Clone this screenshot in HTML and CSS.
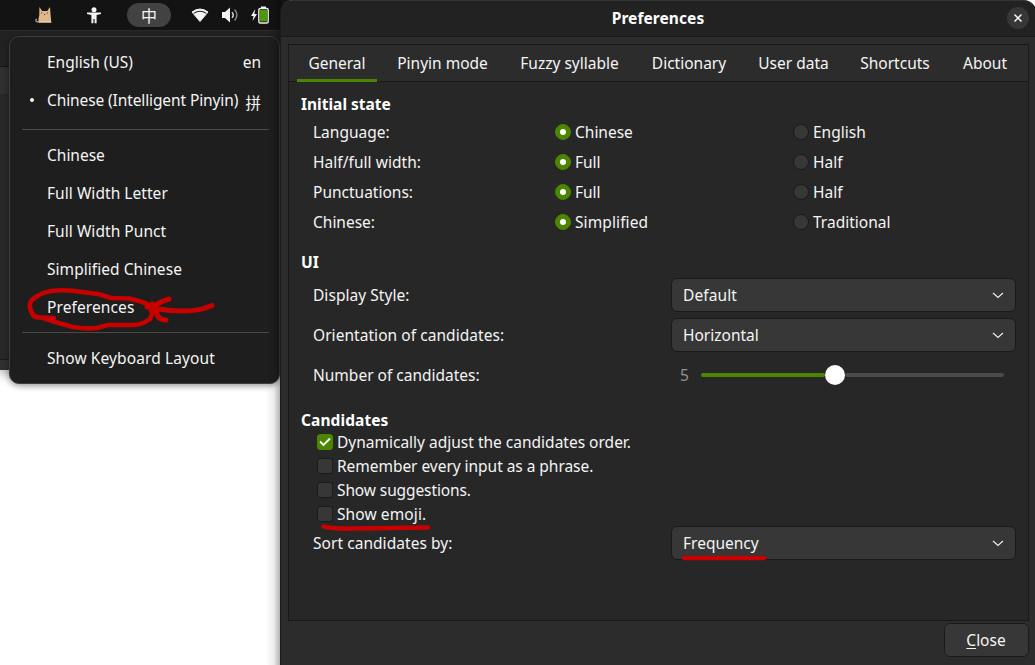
FILE: index.html
```html
<!DOCTYPE html>
<html lang="en">
<head>
<meta charset="utf-8">
<title>Preferences</title>
<link rel="stylesheet" href="styles.css">
</head>
<body>
<div class="desktop">
  <div class="back-window"><div class="back-head"></div><div class="back-body"></div><div class="back-foot"></div></div>
  <header class="topbar">
    <svg class="cat" width="18" height="18" viewBox="0 0 18 18"><path d="M4.500 15.500Q1 16.500 .8 14.200Q.8 13 2 13" fill="none" stroke="#b9a895" stroke-width="1.2"/><path d="M3.600 16.500Q3 13 4.300 9L4.400 1 7.200 5H12.300L15 1 15.600 9 16.300 16.500Z" fill="#dfb88a"/><path d="M6.200 7h1M11.800 7h1M9 8.500h1.200" stroke="#4c3825" stroke-width="1"/><path d="M4 16h12.300" stroke="#eadcca" stroke-width="1"/></svg>
    <svg class="person" width="14" height="18" viewBox="0 0 14 18"><circle cx="7" cy="2.8" r="2.5" fill="#f4f4f4"/><path d="M0 5.500H14V7L9.600 8V16.300H7.600V12H6.400V16.300H4.400V8L0 7Z" fill="#f4f4f4"/></svg>
    <div class="ime">中</div>
    <svg class="wifi" width="18" height="15" viewBox="0 0 18 15"><path d="M1 4Q9-2 17 4L9 13.5Z" fill="#f4f4f4" stroke="#f4f4f4"/><path d="M2.7 5.4Q9 1 15.3 5.4" fill="none" stroke="#242424" stroke-width="1.1"/></svg>
    <svg class="sound" width="17" height="16" viewBox="0 0 17 16"><path d="M0 5H3L8 .5V15.5L3 11H0Z" fill="#f4f4f4"/><path d="M10 5.2Q12.5 8 10 10.8" fill="none" stroke="#ddd" stroke-width="1.4"/><path d="M12.6 2.5Q17.2 8 12.6 13.5" fill="none" stroke="#888" stroke-width="1.4"/></svg>
    <svg class="battery" width="18" height="18" viewBox="0 0 18 18"><path d="M4.3 3 0 10H2.5L1.6 15 6 8H3.3Z" fill="#f4f4f4"/><path d="M10 1.500h5" stroke="#f4f4f4" stroke-width="2"/><rect x="7.800" y="2.500" width="9.400" height="14.500" rx="1.500" fill="#111" stroke="#eee" stroke-width="1.400"/><rect x="9" y="4" width="7" height="11.500" fill="#4e9a06"/></svg>
  </header>
  <nav class="menu">
    <div class="item"><span class="t">English (US)</span><span class="code">en</span></div>
    <div class="item current"><span class="t tight">Chinese (Intelligent Pinyin)</span><span class="code han">拼</span></div>
    <hr class="rule first">
    <div class="item"><span class="t">Chinese</span></div>
    <div class="item"><span class="t loose">Full Width Letter</span></div>
    <div class="item"><span class="t loose">Full Width Punct</span></div>
    <div class="item"><span class="t loose">Simplified Chinese</span></div>
    <div class="item"><span class="t looser">Preferences</span></div>
    <hr class="rule">
    <div class="item"><span class="t looser">Show Keyboard Layout</span></div>
  </nav>
  <div class="window-shade"></div>
  <main class="window">
    <header class="titlebar"><h1>Preferences</h1><button class="x"><svg width="10" height="10" viewBox="0 0 10 10"><path d="M1.500 1.500 8.500 8.500M8.500 1.500 1.500 8.500" stroke="#fff" stroke-width="1.400"/></svg></button></header>
    <section class="notebook">
      <div class="tabs">
        <div class="tab w1 on">General</div><div class="tab w2">Pinyin mode</div><div class="tab w3">Fuzzy syllable</div><div class="tab w4">Dictionary</div><div class="tab w5">User data</div><div class="tab w6">Shortcuts</div><div class="tab w7">About</div>
      </div>
      <div class="page">
        <h2>Initial state</h2>
        <div class="radio-row"><span class="t">Language:</span><label><i class="radio on"></i>Chinese</label><label><i class="radio"></i>English</label></div>
        <div class="radio-row"><span class="t loose">Half/full width:</span><label><i class="radio on"></i>Full</label><label><i class="radio"></i>Half</label></div>
        <div class="radio-row"><span class="t">Punctuations:</span><label><i class="radio on"></i>Full</label><label><i class="radio"></i>Half</label></div>
        <div class="radio-row"><span class="t">Chinese:</span><label class="looser"><i class="radio on"></i>Simplified</label><label><i class="radio"></i>Traditional</label></div>
        <h2 class="ui">UI</h2>
        <div class="field"><span class="t loose">Display Style:</span><div class="select looser">Default<svg width="12" height="7" viewBox="0 0 12 7"><path d="M1 1 6 5.4 11 1" fill="none" stroke="#eee" stroke-width="1.2"/></svg></div></div>
        <div class="field"><span class="t loose">Orientation of candidates:</span><div class="select">Horizontal<svg width="12" height="7" viewBox="0 0 12 7"><path d="M1 1 6 5.4 11 1" fill="none" stroke="#eee" stroke-width="1.2"/></svg></div></div>
        <div class="field"><span class="t">Number of candidates:</span><div class="slider"><span class="num">5</span><div class="track filled"></div><div class="knob"></div><div class="track rest"></div></div></div>
        <h2 class="cand">Candidates</h2>
        <label class="check-row"><i class="check on"><svg width="12" height="10" viewBox="0 0 12 10"><path d="M1 4.5 4.5 8 11 1.5" fill="none" stroke="#fff" stroke-width="1.800"/></svg></i><span>Dynamically adjust the candidates order.</span></label>
        <label class="check-row"><i class="check"></i><span class="snug">Remember every input as a phrase.</span></label>
        <label class="check-row"><i class="check"></i><span class="tight">Show suggestions.</span></label>
        <label class="check-row"><i class="check"></i><span class="looser">Show emoji.</span></label>
        <div class="field sort"><span class="t loose">Sort candidates by:</span><div class="select">Frequency<svg width="12" height="7" viewBox="0 0 12 7"><path d="M1 1 6 5.4 11 1" fill="none" stroke="#eee" stroke-width="1.2"/></svg></div></div>
      </div>
    </section>
    <footer class="actions"><button class="close"><span><u>C</u>lose</span></button></footer>
  </main>
  <svg class="ink" width="1035" height="665" viewBox="0 0 1035 665" fill="none" stroke="#c80000" stroke-linecap="round" stroke-linejoin="round">
    <path stroke-width="4.6" d="M54 318 42 317.500Q36 318 33 315Q28 307 31 301Q39 293 51 291Q66 289 82 292L98 294 111 298 129 298.500Q140 301 147 304L152 307 153 312 150 319Q142 325 132 325L108 325 97 328Q85 329 73 327L55 322 43 318"/>
    <path stroke-width="5" d="M169 299Q159 302 153 307L147 307M152 304 158 309Q170 311 184 311Q200 311 212 305.500M156 308Q156 320 166 320"/>
    <path stroke-width="7" d="M152 306V310"/>
    <path stroke-width="4.600" d="M323.500 526.500Q334 529 352 528.500L428 527.500M684 558H764"/>
  </svg>
</div>
</body>
</html>
```
FILE: styles.css
```css
*{box-sizing:border-box}
body{margin:0;background:#fff;color:#f4f4f4;font:15.500px/20px "Noto Sans","Noto Sans CJK SC",sans-serif}
.desktop{position:relative;width:1035px;height:665px;overflow:hidden;background:#fff}
.back-window{position:absolute;left:0;top:0;width:290px;height:370px;background:#282828;display:flex;flex-direction:column;box-shadow:0 2px 12px #0007}
.back-head{height:67px;background:#222;border-bottom:1px solid #161616}
.back-body{flex:1;background:linear-gradient(#303030 27px,#292929 27px)}
.back-foot{height:11px;background:#303030;border-top:1px solid #1b1b1b}
.topbar{position:absolute;left:0;top:0;width:290px;height:31px;background:#131313;border-bottom:1px solid #2a2a2a;display:flex;align-items:center;padding-left:35px}
.cat{margin-right:34px}
.person{margin-right:26px;margin-top:1px}
.ime{width:44px;height:24px;border-radius:12px;background:#424242;display:grid;place-items:center;font:16px/20px "Noto Sans CJK SC",sans-serif}
.wifi{margin-left:20px}
.sound{margin-left:13px}
.battery{margin-left:12px}
.menu{position:absolute;left:9px;top:36px;width:271px;height:348px;border:1px solid #3d3d3d;border-radius:10px;background:#1e1e1e;padding:6px 10px 0 12px;box-shadow:0 2px 6px #0006}
.item{height:38px;display:flex;align-items:center;justify-content:space-between;padding:0 8px 0 25px}
.item.current{position:relative}
.item.current::before{content:"";position:absolute;left:8px;top:17px;width:4px;height:4px;border-radius:50%;background:#f4f4f4}
.item .t,.radio-row,.check-row,.field .t{white-space:nowrap}
.tight{letter-spacing:-.11px}
.snug{letter-spacing:-.04px}
.loose{letter-spacing:.05px}
.looser{letter-spacing:.1px}
.han{font-family:"Noto Sans CJK SC",sans-serif;padding-top:3px}
.rule{border:0;height:1px;margin:6px 0;background:#4a4a4a}
.rule.first{margin:10px 0 6px}
.window-shade{position:absolute;left:266px;top:0;width:15px;height:665px;background:linear-gradient(90deg,#0000,#0001 50%,#0005)}
.window{position:absolute;left:280px;top:0;width:756px;height:666px;background:#2c2c2c;border:1px solid #1a1a1a;border-top-color:#343434;border-radius:12px 12px 0 0;display:flex;flex-direction:column}
.titlebar{height:36px;flex:none;background:#222;border-bottom:1px solid #181818;border-radius:11px 11px 0 0;display:grid;grid-template-columns:1fr auto 1fr;align-items:center}
h1,h2{margin:0;font-size:15.500px;line-height:20px;font-weight:700;color:#fff}
h1{grid-column:2;padding-bottom:1px;letter-spacing:.08px}
.x{justify-self:end;width:22px;height:22px;border:0;border-radius:50%;background:#373737;display:grid;place-items:center;padding:0;margin:0 6px 2px 0}
.notebook{margin:7px 6px 0 7px;height:577px;border:1px solid #191919;background:#272727}
.tabs{height:37px;background:#2c2c2c;border-bottom:1px solid #191919;display:flex;gap:8px;padding-left:8px}
.tab{height:37px;display:flex;align-items:center;justify-content:center;white-space:nowrap;border-bottom:3px solid transparent;padding-top:1px}
.tab.on{border-color:#4b8501}
.w1{width:80px}.w2{width:115px}.w3{width:123px}.w4{width:100px}.w5{width:93px}.w6{width:94px}.w7{width:70px}
.page{padding:12px 12px 0}
.radio-row{height:30px;display:grid;grid-template-columns:242px 238px 1fr;align-items:center;padding-left:12px}
h2+.radio-row{margin-top:3px}
label{display:flex;align-items:center;gap:4px}
.radio{width:16px;height:16px;border-radius:50%;background:#373737;border:1px solid #1b1b1b;display:grid;place-items:center}
.radio.on{background:#4b8501;border-color:#4b8501}
.radio.on::after{content:"";width:6px;height:6px;border-radius:50%;background:#fff}
.ui{margin-top:15px;margin-bottom:3px}
.field{height:40px;display:flex;align-items:center;justify-content:space-between;padding-left:12px}
.select{width:345px;height:34px;border:1px solid #1a1a1a;border-radius:6px;background:#373737;display:flex;align-items:center;justify-content:space-between;padding:0 11px}
.slider{width:345px;display:flex;align-items:center;padding-left:9px;color:#929292}
.num{width:21px}
.track{height:4px;background:#4b4b4b;border-radius:2px}
.filled{width:124px;background:#4b8501}
.knob{width:20px;height:20px;border-radius:50%;background:#fff}
.rest{width:159px}
.cand{margin-top:15px;letter-spacing:.08px}
.check-row{height:24px;padding-left:16px}
.check{width:16px;height:16px;border:1px solid #1a1a1a;border-radius:3px;background:#373737;display:grid;place-items:center}
.check.on{background:#4b8501;border-color:#4b8501}
.sort{height:34px}
.actions{display:flex;justify-content:flex-end;padding:2px 6px 0 0}
.close{width:85px;height:34px;border:1px solid #1a1a1a;border-radius:6px;background:#373737;color:#f4f4f4;font:inherit;padding:0 1px 0 0}
.close u{text-underline-offset:2px}
.ink{position:absolute;left:0;top:0;pointer-events:none}
```
